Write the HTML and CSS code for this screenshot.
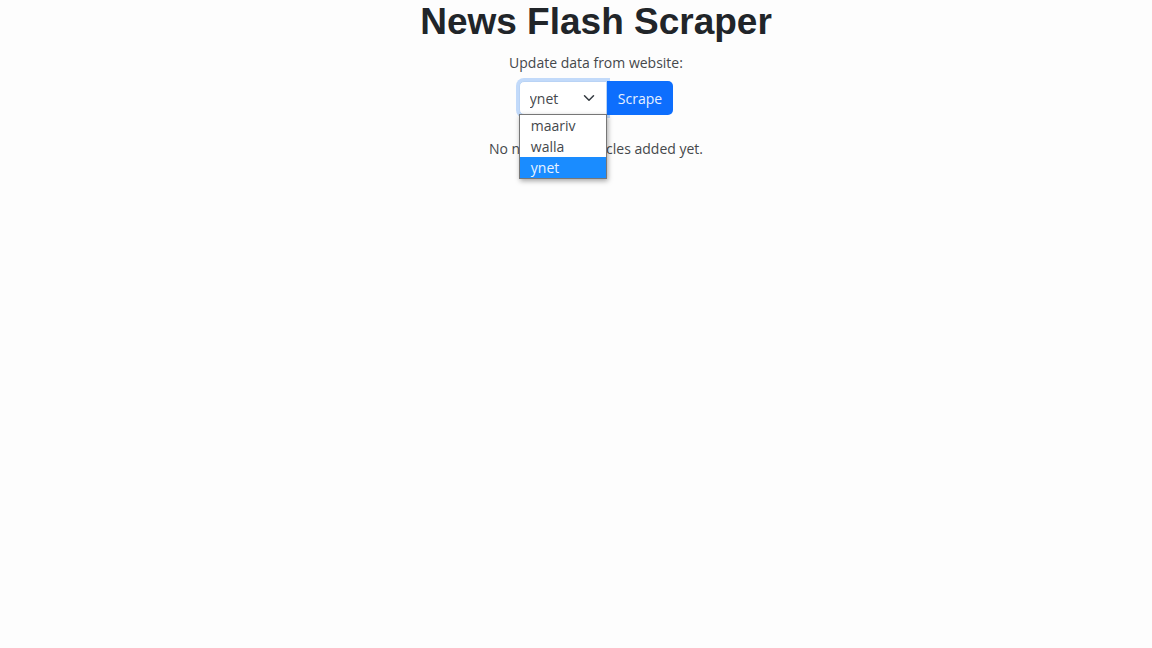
FILE: index.html
```html
<!DOCTYPE html>
<html lang="en">
<head>
<meta charset="utf-8">
<meta name="viewport" content="width=device-width, initial-scale=1">
<title>News Flash Scraper</title>
<link rel="stylesheet" href="styles.css">
</head>
<body class="page">
<main class="scraper">
  <h1 class="title">News Flash Scraper</h1>
  <form class="form">
    <label class="label" for="source">Update data from website:</label>
    <div class="input-group">
      <div class="select-wrap">
        <select class="select" id="source">
          <option>maariv</option>
          <option>walla</option>
          <option selected>ynet</option>
        </select>
        <svg class="chevron" viewBox="0 0 16 16" aria-hidden="true"><path d="m2 5 6 6 6-6"/></svg>
        <ul class="menu" role="listbox" aria-label="Website">
          <li class="option" role="option">maariv</li>
          <li class="option" role="option">walla</li>
          <li class="option option-active" role="option" aria-selected="true">ynet</li>
        </ul>
      </div>
      <button class="button" type="button">Scrape</button>
    </div>
  </form>
  <p class="empty">No news flash articles added yet.</p>
</main>
</body>
</html>
```

FILE: styles.css
```css
* {
  box-sizing: border-box;
}

.page {
  min-height: 100vh;
  margin: 0;
  background: #fdfdfd;
  color: #45484b;
  font-family: "Segoe UI", "Open Sans", sans-serif;
  font-size: 14px;
  line-height: 20px;
}

.scraper {
  display: flex;
  flex-direction: column;
  align-items: center;
  padding-left: 40px;
}

.title {
  margin: 0 0 9px;
  color: #212529;
  font-family: "Liberation Sans", Arial, sans-serif;
  font-size: 37px;
  font-weight: 700;
  line-height: 44px;
}

.form {
  display: flex;
  flex-direction: column;
  align-items: center;
  gap: 8px;
}

.input-group {
  display: flex;
  height: 34px;
}

.select-wrap {
  position: relative;
  width: 88px;
}

.select {
  width: 100%;
  height: 100%;
  padding: 2px 28px 0 10px;
  border: 1px solid #b9d3f5;
  border-radius: 5px 0 0 5px;
  outline: 0;
  appearance: none;
  background: #fff;
  box-shadow: 0 0 0 3px #c2dafa;
  color: inherit;
  font: inherit;
}

.chevron {
  position: absolute;
  top: 11px;
  right: 12px;
  width: 12px;
  height: 12px;
  fill: none;
  stroke: #343a40;
  stroke-width: 2;
  stroke-linecap: round;
  stroke-linejoin: round;
  pointer-events: none;
}

.menu {
  position: absolute;
  top: calc(100% - 1px);
  left: 0;
  z-index: 2;
  width: 100%;
  margin: 0;
  padding: 0;
  border: 1px solid #777;
  background: #fff;
  box-shadow: 1px 2px 5px rgb(0 0 0 / 35%);
  list-style: none;
}

.option {
  padding: 0 11px;
  line-height: 21px;
}

.option-active {
  background: #1a8cff;
  color: #e8f3ff;
}

.button {
  z-index: 1;
  padding: 2px 11px 0;
  border: 0;
  border-radius: 0 5px 5px 0;
  background: #0d6efd;
  color: #e8f1ff;
  font: inherit;
}

.empty {
  margin: 24px 0 0;
}
```
